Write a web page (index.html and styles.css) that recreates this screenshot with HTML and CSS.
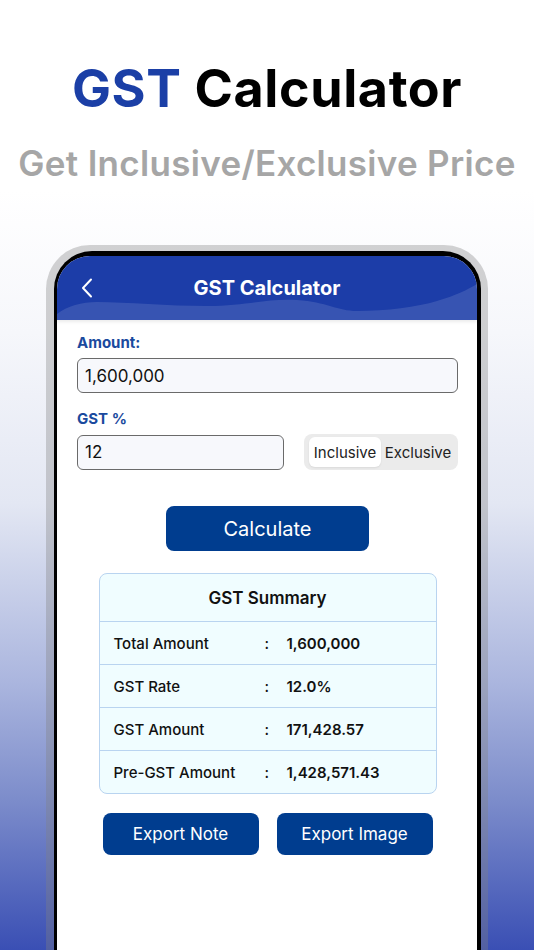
FILE: index.html
```html
<!DOCTYPE html>
<html lang="en">
<head>
<meta charset="utf-8">
<title>GST Calculator</title>
<link rel="stylesheet" href="styles.css">
</head>
<body>
<div class="page">
  <header class="hero">
    <h1 class="hero-title"><span class="accent">GST</span> Calculator</h1>
    <p class="hero-sub">Get Inclusive/Exclusive Price</p>
  </header>

  <div class="phone">
    <div class="bezel">
      <div class="screen">
        <div class="appbar">
          <svg class="wave" viewBox="0 0 420 64" preserveAspectRatio="none" aria-hidden="true">
            <path d="M0 58 C 10 50, 25 46, 40 46 C 70 46, 110 50, 150 50 C 190 50, 210 42, 240 44 C 270 46, 280 55, 300 55 C 330 55, 360 51, 380 45 C 400 39, 410 34, 420 28 L 420 64 L 0 64 Z" fill="rgba(255,255,255,0.12)"/>
          </svg>
          <svg class="back" viewBox="0 0 12 20" aria-hidden="true">
            <path d="M10 1.5 L2 10 L10 18.5" fill="none" stroke="#fff" stroke-width="2" stroke-linecap="round" stroke-linejoin="round"/>
          </svg>
          <div class="appbar-title">GST Calculator</div>
        </div>

        <div class="content">
          <label class="field-label">Amount:</label>
          <div class="input">1,600,000</div>

          <label class="field-label gap">GST %</label>
          <div class="rate-row">
            <div class="input rate">12</div>
            <div class="segment">
              <span class="seg-item active">Inclusive</span>
              <span class="seg-item">Exclusive</span>
            </div>
          </div>

          <div class="btn-wrap">
            <button class="btn btn-calc">Calculate</button>
          </div>

          <div class="card">
            <div class="card-head">GST Summary</div>
            <div class="row"><span class="k">Total Amount</span><span class="c">:</span><span class="v">1,600,000</span></div>
            <div class="row"><span class="k">GST Rate</span><span class="c">:</span><span class="v">12.0%</span></div>
            <div class="row"><span class="k">GST Amount</span><span class="c">:</span><span class="v">171,428.57</span></div>
            <div class="row"><span class="k">Pre-GST Amount</span><span class="c">:</span><span class="v">1,428,571.43</span></div>
          </div>

          <div class="exports">
            <button class="btn btn-export">Export Note</button>
            <button class="btn btn-export">Export Image</button>
          </div>
        </div>
      </div>
    </div>
  </div>
</div>
</body>
</html>
```

FILE: styles.css
```css
* { box-sizing: border-box; }

html, body {
  margin: 0;
  padding: 0;
}

body {
  width: 534px;
  height: 950px;
  overflow: hidden;
  font-family: Inter, "Noto Sans", sans-serif;
  background: linear-gradient(to bottom, #ffffff 0%, #ffffff 20%, #f6f7fb 35%, #e3e7f3 53%, #aab5de 72%, #7d8dcb 84%, #3a4fb4 100%);
}

.page {
  width: 534px;
  height: 950px;
  display: flex;
  flex-direction: column;
}

.hero {
  text-align: center;
  padding-top: 58px;
}

.hero-title {
  margin: 0;
  font-family: Inter, sans-serif;
  font-weight: 700;
  font-size: 52px;
  line-height: 62px;
  color: #000;
  letter-spacing: 0.6px;
}

.hero-title .accent { color: #1b3fa6; }

.hero-sub {
  margin: 22px 0 0;
  font-family: Inter, sans-serif;
  font-weight: 600;
  font-size: 35px;
  line-height: 42px;
  color: #a6a6a6;
  letter-spacing: 0.3px;
}

.phone {
  margin-top: 61px;
  margin-left: 46px;
  width: 442px;
  flex: 1;
  background: rgba(128, 128, 128, 0.35);
  border-radius: 44px 44px 0 0;
  padding: 6px 7px 0 8px;
  display: flex;
}

.bezel {
  flex: 1;
  background: #000;
  border-radius: 38px 38px 0 0;
  padding: 5px 4px 0 3px;
  display: flex;
}

.screen {
  flex: 1;
  background: #fff;
  border-radius: 33px 33px 0 0;
  overflow: hidden;
  display: flex;
  flex-direction: column;
}

.appbar {
  position: relative;
  height: 64px;
  background: #1c3da8;
  display: flex;
  align-items: center;
  justify-content: center;
  box-shadow: 0 2px 3px rgba(0, 0, 0, 0.08);
}

.wave {
  position: absolute;
  left: 0;
  bottom: 0;
  width: 100%;
  height: 64px;
}

.back {
  position: absolute;
  left: 24px;
  top: 22px;
  width: 12px;
  height: 20px;
}

.appbar-title {
  position: relative;
  color: #fff;
  font-weight: 700;
  font-size: 20px;
  line-height: 24px;
  margin-top: -1px;
}

.content {
  padding: 14px 19px 0 20px;
  display: flex;
  flex-direction: column;
}

.field-label {
  display: block;
  font-weight: 700;
  font-size: 15px;
  line-height: 18px;
  color: #1a4a9e;
  margin-bottom: 6px;
}

.field-label.gap { margin-top: 17px; }

.input {
  height: 35px;
  border: 1.5px solid #6a6a6a;
  border-radius: 6px;
  background: #f7f8fc;
  padding: 0 7px;
  display: flex;
  align-items: center;
  font-size: 17px;
  color: #111;
}

.rate-row {
  display: flex;
  align-items: center;
  gap: 20px;
}

.input.rate { width: 207px; }

.segment {
  flex: 1;
  height: 36px;
  background: #ebebeb;
  border-radius: 8px;
  padding: 3px 3px 3px 5px;
  display: flex;
  align-items: stretch;
}

.seg-item {
  display: flex;
  align-items: center;
  justify-content: center;
  font-size: 15px;
  color: #222;
  border-radius: 6px;
}

.seg-item.active {
  background: #fff;
  width: 72px;
  box-shadow: 0 1px 2px rgba(0,0,0,0.08);
}

.seg-item:last-child { flex: 1; }

.btn {
  border: none;
  font-family: Inter, "Noto Sans", sans-serif;
  color: #fff;
  background: #003d8f;
  border-radius: 8px;
  padding: 0;
}

.btn-wrap {
  display: flex;
  justify-content: center;
  margin-top: 36px;
}

.btn-calc {
  width: 203px;
  height: 45px;
  font-size: 20px;
}

.card {
  width: 338px;
  align-self: center;
  margin-top: 22px;
  background: #f0fdff;
  border: 1px solid #b9d4f0;
  border-radius: 8px;
}

.card-head {
  height: 47px;
  display: flex;
  align-items: center;
  justify-content: center;
  font-weight: 600;
  font-size: 17px;
  color: #111;
}

.row {
  height: 43px;
  border-top: 1px solid #b9d4f0;
  display: grid;
  grid-template-columns: 151px 22px 1fr;
  align-items: center;
  padding-left: 14px;
  font-size: 15px;
  color: #111;
}

.row .k { font-weight: 500; }
.row .c { font-weight: 500; }
.row .v { font-weight: 600; }

.exports {
  display: flex;
  justify-content: center;
  gap: 18px;
  margin-top: 19px;
}

.btn-export {
  width: 156px;
  height: 42px;
  font-size: 17px;
}
```
